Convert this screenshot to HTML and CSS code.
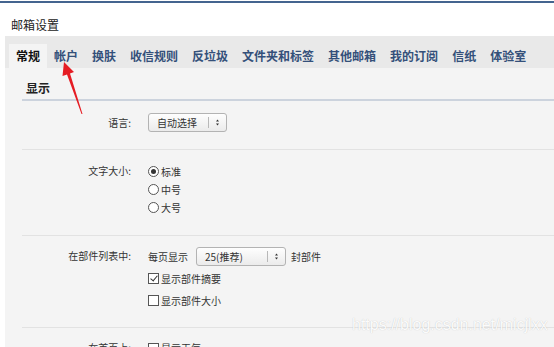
FILE: index.html
```html
<!DOCTYPE html>
<html lang="zh-CN">
<head>
    <meta charset="UTF-8">
    <title>邮箱设置</title>
    <link rel="stylesheet" href="styles.css">
</head>
<body>
    <div class="topline"></div>
    <div class="title">邮箱设置</div>

    <div class="panel">
        <div class="tabs">
            <span class="tab tab-active">常规</span>
            <span class="tab">帐户</span>
            <span class="tab">换肤</span>
            <span class="tab">收信规则</span>
            <span class="tab">反垃圾</span>
            <span class="tab">文件夹和标签</span>
            <span class="tab">其他邮箱</span>
            <span class="tab">我的订阅</span>
            <span class="tab">信纸</span>
            <span class="tab">体验室</span>
        </div>

        <div class="content">
            <div class="section-title">显示</div>

            <div class="row">
                <div class="label">语言:</div>
                <div class="field">
                    <div class="line">
                        <span class="select select-lang">
                            <span class="select-text">自动选择</span>
                            <svg class="select-arrow" width="18" height="17" viewBox="0 0 18 17">
                                <line x1="0.5" y1="3" x2="0.5" y2="14" stroke="#b8b8b8"/>
                                <path d="M8 7.5 L9.5 5.5 L11 7.5 Z M8 9.5 L9.5 11.5 L11 9.5 Z" fill="#333"/>
                            </svg>
                        </span>
                    </div>
                </div>
            </div>

            <div class="row row-radio">
                <div class="label">文字大小:</div>
                <div class="field">
                    <div class="line"><span class="radio radio-on"></span>标准</div>
                    <div class="line"><span class="radio"></span>中号</div>
                    <div class="line"><span class="radio"></span>大号</div>
                </div>
            </div>

            <div class="row row-list">
                <div class="label">在部件列表中:</div>
                <div class="field">
                    <div class="line">
                        每页显示
                        <span class="select select-count">
                            <span class="select-text">25(推荐)</span>
                            <svg class="select-arrow" width="18" height="17" viewBox="0 0 18 17">
                                <line x1="0.5" y1="3" x2="0.5" y2="14" stroke="#b8b8b8"/>
                                <path d="M8 7.5 L9.5 5.5 L11 7.5 Z M8 9.5 L9.5 11.5 L11 9.5 Z" fill="#333"/>
                            </svg>
                        </span>
                        <span class="after-select">封部件</span>
                    </div>
                    <div class="line"><span class="check check-on"></span>显示部件摘要</div>
                    <div class="line"><span class="check"></span>显示部件大小</div>
                </div>
            </div>

            <div class="row row-home">
                <div class="label">在首页上:</div>
                <div class="field">
                    <div class="line"><span class="check"></span>显示天气</div>
                </div>
            </div>
        </div>
    </div>

    <svg class="arrow" width="554" height="347" viewBox="0 0 554 347">
        <polygon points="64,62 74,72 70,73.5 82.5,114 81.5,114 67,74.5 62.5,76" fill="#e51c23"/>
    </svg>

    <div class="watermark">https://blog.csdn.net/micjlxx</div>
</body>
</html>
```

FILE: styles.css
```css
body {
    margin: 0;
    font-family: "Noto Sans CJK SC", sans-serif;
    font-size: 10px;
    color: #333;
    background-color: #fff;
    overflow: hidden;
    position: relative;
    height: 347px;
}

.topline {
    height: 2px;
    margin-top: 1px;
    background-color: #44648f;
}

.title {
    padding: 12px 0 1px 11px;
    line-height: 20px;
    font-size: 12px;
    color: #222;
}

.panel {
    margin-left: 5px;
    background-color: #f4f4f4;
    height: 311px;
}

.tabs {
    display: flex;
    height: 24px;
    padding: 8px 0 0 4px;
    background-color: #e9e9e9;
}

.tab {
    padding: 0 7px;
    line-height: 24px;
    font-size: 12px;
    font-weight: bold;
    color: #34507a;
}

.tab-active {
    background-color: #f4f4f4;
    color: #111;
}

.content {
    padding-left: 17px;
}

.section-title {
    padding: 9px 0 0 4px;
    line-height: 22px;
    font-size: 12px;
    font-weight: bold;
    color: #222;
    border-bottom: 2px solid #ccd3dd;
}

.row {
    display: grid;
    grid-template-columns: 109px 1fr;
    column-gap: 17px;
    padding: 12px 0 17px;
    border-bottom: 1px solid #e2e2e2;
}

.label {
    text-align: right;
    line-height: 19px;
}

.line {
    display: flex;
    align-items: center;
    height: 19px;
}

/* radio rows */
.row-radio {
    padding-bottom: 19px;
}

.row-radio .label {
    line-height: 18px;
}

.row-radio .line {
    height: 18px;
}

/* list rows */
.row-list {
    padding-top: 10px;
}

.row-list .label {
    line-height: 20px;
}

.row-list .line {
    height: 20px;
}

.row-list .line + .line {
    margin-top: 2px;
}

.row-list .line:first-child {
    margin-bottom: 2px;
}

.row-home {
    padding-top: 10px;
}

.row-home .label,
.row-home .line {
    line-height: 20px;
    height: 20px;
}

/* fake select */
.select {
    display: inline-flex;
    align-items: center;
    box-sizing: border-box;
    height: 19px;
    border: 1px solid #b3b3b3;
    border-radius: 3px;
    background: linear-gradient(#fefefe, #ebebeb);
}

.select-lang {
    width: 79px;
}

.select-count {
    width: 90px;
    margin-left: 8px;
}

.select-text {
    flex: 1;
    padding-left: 8px;
    color: #333;
}

.select-arrow {
    display: block;
}

.after-select {
    margin-left: 5px;
}

/* radios & checkboxes */
.radio {
    position: relative;
    box-sizing: border-box;
    width: 11px;
    height: 11px;
    margin-right: 2px;
    border: 1px solid #555;
    border-radius: 50%;
    background-color: #fff;
}

.radio-on::after {
    content: "";
    position: absolute;
    left: 2px;
    top: 2px;
    width: 5px;
    height: 5px;
    border-radius: 50%;
    background-color: #333;
}

.check {
    position: relative;
    box-sizing: border-box;
    width: 11px;
    height: 11px;
    margin-right: 2px;
    border: 1px solid #555;
    background-color: #fff;
}

.check-on::after {
    content: "";
    position: absolute;
    left: 3px;
    top: 0px;
    width: 3px;
    height: 6px;
    border-right: 1px solid #333;
    border-bottom: 1px solid #333;
    transform: rotate(40deg);
}

/* overlays */
.arrow {
    position: absolute;
    left: 0;
    top: 0;
    pointer-events: none;
}

.watermark {
    position: absolute;
    left: 352px;
    top: 316px;
    font-family: "Liberation Sans", Arial, sans-serif;
    font-size: 16px;
    line-height: 18px;
    color: rgba(255, 255, 255, 0.95);
    text-shadow: 0 0 1px rgba(0, 0, 0, 0.22);
}
```
